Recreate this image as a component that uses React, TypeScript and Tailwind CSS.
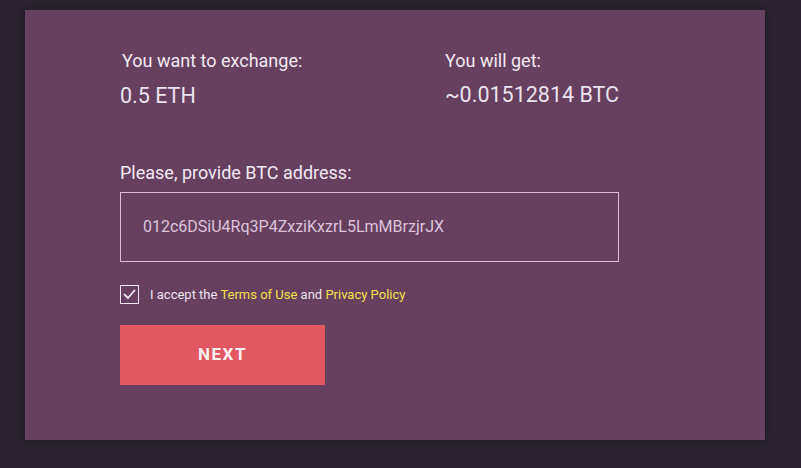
import React from "react";

export default function App() {
  return (
    <div className="w-[801px] h-[468px] bg-[#2b2430] pt-[10px] pl-[25px]" style={{ fontFamily: "Roboto, 'Liberation Sans', sans-serif" }}>
      <div className="w-[740px] h-[430px] bg-[#673f5f] pl-[95px] pt-[40px] shadow-[0_0_6px_rgba(0,0,0,0.35)]">
        <div className="flex">
          <div className="w-[325px]">
            <div className="text-[18px] leading-[22px] text-[#f3e9f1] pl-[2px]">You want to exchange:</div>
            <div className="mt-[11px] text-[21.5px] leading-[26px] text-[#ece3ee]">0.5 ETH</div>
          </div>
          <div>
            <div className="text-[18px] leading-[22px] text-[#f3e9f1]">You will get:</div>
            <div className="mt-[10px] text-[21.5px] leading-[26px] text-[#ece3ee]">~0.01512814 BTC</div>
          </div>
        </div>
        <div className="mt-[53px] text-[18px] leading-[22px] text-[#f3e9f1]">Please, provide BTC address:</div>
        <div className="mt-[8px] w-[499px] h-[70px] border border-[#e4b6df] flex items-center pl-[22px] text-[16px] text-[#dcc4da]">
          012c6DSiU4Rq3P4ZxziKxzrL5LmMBrzjrJX
        </div>
        <div className="mt-[23px] flex items-center">
          <div className="w-[19px] h-[19px] border border-[#f3e9f1] flex items-center justify-center">
            <svg width="13" height="11" viewBox="0 0 13 11" fill="none">
              <path d="M1.5 5.5 L5 9 L11.5 1.5" stroke="#f3e9f1" strokeWidth="1.8" strokeLinecap="round" strokeLinejoin="round" />
            </svg>
          </div>
          <div className="ml-[11px] text-[13px] text-[#ece3ee]">
            I accept the <span className="text-[#f2e14a]">Terms of Use</span> and <span className="text-[#f2e14a]">Privacy Policy</span>
          </div>
        </div>
        <div className="mt-[20px] w-[205px] h-[60px] bg-[#e25862] flex items-center justify-center text-[17px] font-bold tracking-[1.5px] text-[#fbeef0]">
          NEXT
        </div>
      </div>
    </div>
  );
}
